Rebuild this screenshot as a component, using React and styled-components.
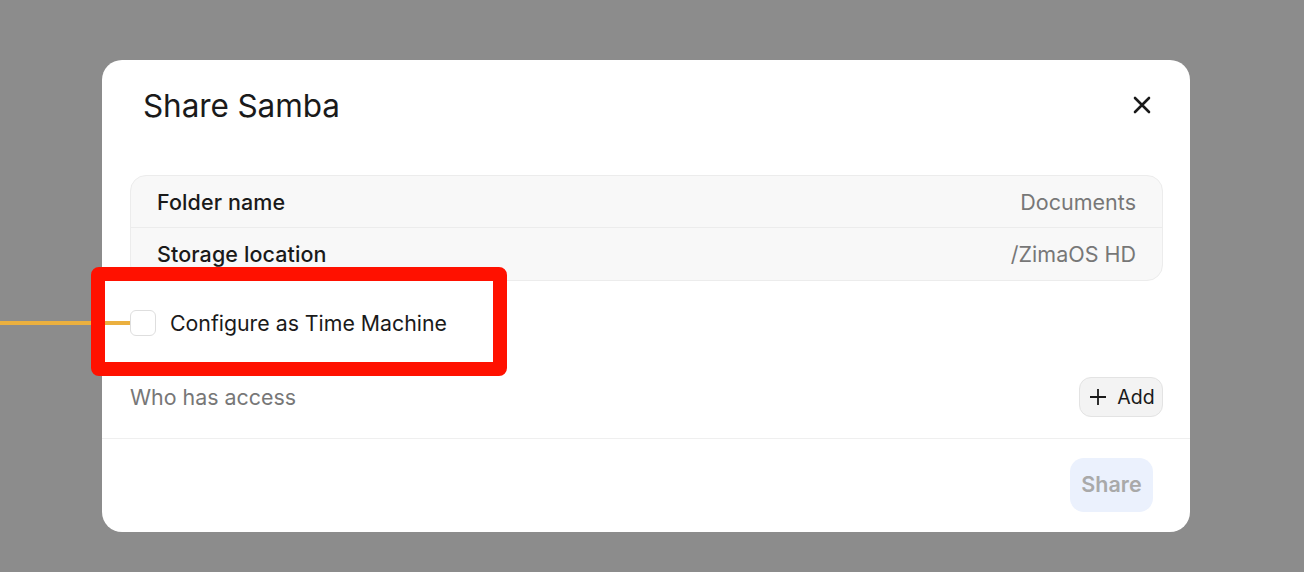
import React, { useState } from "react";
import styled, { createGlobalStyle } from "styled-components";

const GlobalStyle = createGlobalStyle`
  html, body {
    margin: 0;
    padding: 0;
    background: #8c8c8c;
    font-family: "Inter", "Liberation Sans", sans-serif;
  }
`;

const Page = styled.div`
  position: relative;
  width: 1304px;
  height: 572px;
  padding: 60px 0 0 102px;
  box-sizing: border-box;
  overflow: hidden;
`;

const Modal = styled.div`
  width: 1088px;
  height: 472px;
  background: #fff;
  border-radius: 20px;
  display: flex;
  flex-direction: column;
  box-sizing: border-box;
`;

const Header = styled.div`
  height: 90px;
  display: flex;
  align-items: center;
  justify-content: space-between;
  padding: 0 38px 0 41px;
`;

const Title = styled.h2`
  margin: 0;
  font-size: 31.5px;
  font-weight: 400;
  color: #1a1a1a;
  letter-spacing: -0.1px;
`;

const CloseButton = styled.button`
  border: 0;
  background: none;
  padding: 0;
  width: 20px;
  height: 20px;
  display: flex;
  align-items: center;
  justify-content: center;
  cursor: pointer;
`;

const Body = styled.div`
  padding: 25px 27px 0 28px;
  display: flex;
  flex-direction: column;
`;

const InfoTable = styled.div`
  background: #f8f8f8;
  border: 1px solid #ececec;
  border-radius: 16px;
  overflow: hidden;
  padding: 0 0 1px;
`;

const InfoRow = styled.div`
  height: 51px;
  display: flex;
  align-items: center;
  justify-content: space-between;
  padding: 0 26px;
  font-size: 21.5px;
  & + & {
    border-top: 1px solid #ececec;
  }
`;

const Label = styled.span`
  font-weight: 500;
  color: #1a1a1a;
  letter-spacing: 0.1px;
`;

const Value = styled.span`
  color: #777;
`;

const CheckRow = styled.label`
  position: relative;
  margin-top: 29px;
  display: flex;
  align-items: center;
  gap: 14px;
  font-size: 21.3px;
  color: #1a1a1a;
  cursor: pointer;
`;

const Box = styled.span`
  width: 24px;
  height: 24px;
  border: 1px solid #dedede;
  border-radius: 6px;
  background: ${p => (p.checked ? "#3478f6" : "#fff")};
`;

const AccessRow = styled.div`
  margin-top: 41px;
  display: flex;
  align-items: center;
  justify-content: space-between;
`;

const Muted = styled.span`
  font-size: 21.4px;
  color: #777;
`;

const AddButton = styled.button`
  height: 40px;
  width: 84px;
  box-sizing: border-box;
  border: 1px solid #e3e3e3;
  background: #f3f3f3;
  border-radius: 12px;
  display: flex;
  align-items: center;
  justify-content: center;
  gap: 10px;
  font-family: inherit;
  font-size: 19.5px;
  color: #1a1a1a;
  padding: 0 6px 0 8px;
`;

const Footer = styled.div`
  margin-top: 21px;
  border-top: 1px solid #efefef;
  padding: 19px 37px 0 0;
  display: flex;
  justify-content: flex-end;
`;

const ShareButton = styled.button`
  height: 54px;
  width: 83px;
  border: 0;
  border-radius: 14px;
  background: #ebf1fd;
  color: #a9a9a9;
  font-family: inherit;
  font-size: 21.5px;
  font-weight: 600;
  padding: 0 0 3px;
`;

const Highlight = styled.div`
  position: absolute;
  left: 91px;
  top: 267px;
  width: 416px;
  height: 109px;
  box-sizing: border-box;
  border: 14px solid #ff1100;
  border-radius: 8px;
  pointer-events: none;
`;

const Pointer = styled.div`
  position: absolute;
  left: 0;
  top: 321px;
  width: 130px;
  height: 4px;
  background: #ebb03f;
`;

const App = () => {
  const [checked, setChecked] = useState(false);

  return (
    <Page>
      <GlobalStyle />
      <Modal>
        <Header>
          <Title>Share Samba</Title>
          <CloseButton aria-label="close">
            <svg width="18" height="18" viewBox="0 0 18 18">
              <path
                d="M2 2L16 16M16 2L2 16"
                stroke="#1a1a1a"
                strokeWidth="2.6"
                strokeLinecap="round"
              />
            </svg>
          </CloseButton>
        </Header>
        <Body>
          <InfoTable>
            <InfoRow>
              <Label>Folder name</Label>
              <Value>Documents</Value>
            </InfoRow>
            <InfoRow>
              <Label>Storage location</Label>
              <Value>/ZimaOS HD</Value>
            </InfoRow>
          </InfoTable>
          <CheckRow onClick={() => setChecked(c => !c)}>
            <Box checked={checked} />
            Configure as Time Machine
          </CheckRow>
          <AccessRow>
            <Muted>Who has access</Muted>
            <AddButton>
              <svg width="18" height="18" viewBox="0 0 18 18">
                <path
                  d="M9 1V17M1 9H17"
                  stroke="#1a1a1a"
                  strokeWidth="1.8"
                />
              </svg>
              Add
            </AddButton>
          </AccessRow>
        </Body>
        <Footer>
          <ShareButton>Share</ShareButton>
        </Footer>
      </Modal>
      <Pointer />
      <Highlight />
    </Page>
  );
};

export default App;
